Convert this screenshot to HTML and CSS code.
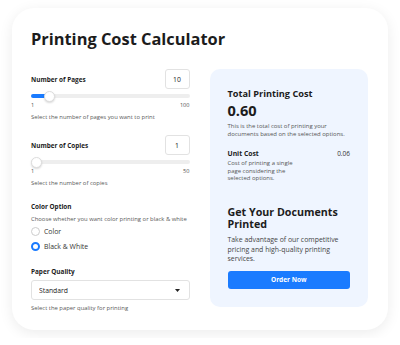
FILE: index.html
```html
<!DOCTYPE html>
<html lang="en">
<head>
    <meta charset="UTF-8">
    <meta name="viewport" content="width=device-width, initial-scale=1.0">
    <title>Printing Cost Calculator</title>
    <link rel="stylesheet" href="styles.css">
</head>
<body>
    <div class="card">
        <h1>Printing Cost Calculator</h1>
        <div class="columns">
            <div class="form">
                <div class="field">
                    <div class="field-head">
                        <label for="pages">Number of Pages</label>
                        <input type="text" class="num-box" value="10">
                    </div>
                    <input type="range" id="pages" class="slider" min="1" max="100" value="10" style="--fill: 9%">
                    <div class="range-labels"><span>1</span><span>100</span></div>
                    <p class="help">Select the number of pages you want to print</p>
                </div>
                <div class="field">
                    <div class="field-head">
                        <label for="copies">Number of Copies</label>
                        <input type="text" class="num-box" value="1">
                    </div>
                    <input type="range" id="copies" class="slider" min="1" max="50" value="1" style="--fill: 0%">
                    <div class="range-labels"><span>1</span><span>50</span></div>
                    <p class="help">Select the number of copies</p>
                </div>
                <div class="field">
                    <div class="field-title">Color Option</div>
                    <p class="help top">Choose whether you want color printing or black &amp; white</p>
                    <label class="radio"><input type="radio" name="color"> Color</label>
                    <label class="radio"><input type="radio" name="color" checked> Black &amp; White</label>
                </div>
                <div class="field last">
                    <label class="field-title" for="quality">Paper Quality</label>
                    <select id="quality" class="select">
                        <option>Standard</option>
                        <option>Premium</option>
                    </select>
                    <p class="help">Select the paper quality for printing</p>
                </div>
            </div>
            <div class="summary">
                <h2>Total Printing Cost</h2>
                <div class="total">0.60</div>
                <p class="note">This is the total cost of printing your documents based on the selected options.</p>
                <div class="unit-row">
                    <div>
                        <h3>Unit Cost</h3>
                        <p class="note narrow">Cost of printing a single page considering the selected options.</p>
                    </div>
                    <span class="unit-value">0.06</span>
                </div>
                <h2 class="promo">Get Your Documents Printed</h2>
                <p class="promo-text">Take advantage of our competitive pricing and high-quality printing services.</p>
                <button class="order">Order Now</button>
            </div>
        </div>
    </div>
</body>
</html>
```

FILE: styles.css
```css
body {
    font-family: "Open Sans", "Noto Sans", sans-serif;
    margin: 0;
    padding: 8px 12px;
    background-color: #fff;
    color: #1c1c1c;
}
.card {
    background: #fff;
    border-radius: 22px;
    box-shadow: 0 3px 14px rgba(0,0,0,0.08);
    padding: 19px 20px 17.5px 19px;
}
h1 {
    margin: 0 0 18px;
    font-size: 16.4px;
    font-weight: 700;
    line-height: 24px;
}
.columns {
    display: grid;
    grid-template-columns: 1fr 1fr;
    gap: 20px;
    align-items: start;
}
.field {
    margin-bottom: 13.5px;
}
.field.last {
    margin-bottom: 0;
}
.field-head {
    display: flex;
    justify-content: space-between;
    align-items: center;
    margin-bottom: 5px;
}
.field-head label,
.field-title {
    display: block;
    font-size: 6.4px;
    line-height: 11px;
    font-weight: 700;
}
.num-box {
    width: 25px;
    height: 20px;
    box-sizing: border-box;
    border: 1px solid #e2e2e2;
    border-radius: 3px;
    text-align: center;
    font: 6.8px "Open Sans", sans-serif;
    color: #222;
    padding: 0;
}
.slider {
    -webkit-appearance: none;
    appearance: none;
    display: block;
    width: 100%;
    height: 4px;
    margin: 0;
    border-radius: 2px;
    background: linear-gradient(to right, #1a7bff var(--fill), #eee var(--fill));
}
.slider::-webkit-slider-thumb {
    -webkit-appearance: none;
    width: 11px;
    height: 11px;
    border-radius: 50%;
    background: #fff;
    border: 1px solid #ddd;
    box-shadow: 0 1px 2px rgba(0,0,0,0.15);
}
.range-labels {
    display: flex;
    justify-content: space-between;
    font-size: 5.6px;
    line-height: 8px;
    color: #555;
    margin-top: 3px;
}
.help {
    margin: 3.5px 0 0;
    font-size: 5.9px;
    line-height: 9px;
    color: #5a5a5a;
}
.help.top {
    margin: 3px 0 2px;
}
.radio {
    display: flex;
    align-items: center;
    gap: 4px;
    font-size: 6.9px;
    line-height: 11px;
    color: #333;
    margin-bottom: 4px;
}
.radio input {
    -webkit-appearance: none;
    appearance: none;
    width: 9px;
    height: 9px;
    margin: 0;
    border-radius: 50%;
    border: 1px solid #ccc;
    box-sizing: border-box;
}
.radio input:checked {
    border: 2.5px solid #1a7bff;
}
.select {
    -webkit-appearance: none;
    appearance: none;
    display: block;
    width: 100%;
    height: 20px;
    margin-top: 3.5px;
    padding: 0 7px;
    border: 1px solid #e2e2e2;
    border-radius: 3px;
    background: #fff url("data:image/svg+xml,%3Csvg xmlns='http://www.w3.org/2000/svg' width='5' height='3'%3E%3Cpath d='M0 0h5L2.5 3z' fill='%23222'/%3E%3C/svg%3E") no-repeat right 9px center;
    font: 6.8px "Open Sans", sans-serif;
    color: #222;
}
.summary {
    background: #eff5ff;
    border-radius: 10px;
    padding: 18px 18px 18px;
}
.summary h2 {
    margin: 0;
    font-size: 9.2px;
    line-height: 14px;
}
.total {
    font-size: 14.6px;
    font-weight: 700;
    line-height: 18px;
}
.note {
    margin: 3px 0 0;
    font-size: 5.95px;
    line-height: 8px;
    color: #555;
}
.note.narrow {
    margin-top: 1.5px;
    width: 72px;
    line-height: 7.5px;
}
.unit-row {
    display: flex;
    justify-content: space-between;
    margin-top: 10.5px;
}
.summary h3 {
    margin: 0;
    font-size: 6.8px;
    line-height: 10px;
}
.unit-value {
    font-size: 6.5px;
    line-height: 10px;
    color: #333;
}
.summary .promo {
    margin-top: 23px;
    font-size: 10.7px;
    line-height: 12.7px;
}
.promo-text {
    margin: 4.5px 0 7px;
    font-size: 6.9px;
    line-height: 9.5px;
    color: #444;
}
.order {
    display: block;
    width: 100%;
    height: 18px;
    border: none;
    border-radius: 3px;
    background: #1a7bff;
    color: #fff;
    font: 700 6.5px "Open Sans", sans-serif;
    cursor: pointer;
}
```
